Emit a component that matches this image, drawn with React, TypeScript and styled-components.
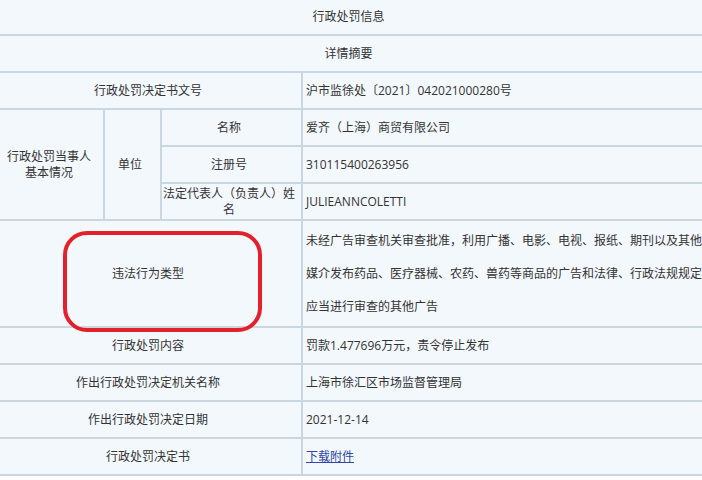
import React from "react";
import styled, { createGlobalStyle } from "styled-components";

const Global = createGlobalStyle`
  html, body { margin: 0; padding: 0; background: #ffffff; }
  body {
    font-family: "Open Sans", "Noto Sans CJK SC", sans-serif;
    font-size: 12px;
    color: #333333;
  }
`;

const Sheet = styled.div`
  display: grid;
  width: 702px;
  grid-template-columns: 103px 55px 139px 399px;
  grid-template-rows: 34px repeat(5, 35px) 105px repeat(4, 35px);
  gap: 2px;
  background: #cbd7e0;
  border-bottom: 2px solid #cbd7e0;
`;

const Cell = styled.div<{ $c: string; $r: string }>`
  grid-column: ${(p) => p.$c};
  grid-row: ${(p) => p.$r};
  background: #f3f8fd;
  display: flex;
  align-items: center;
  min-width: 0;
`;

const Label = styled(Cell)`
  justify-content: center;
  text-align: center;
  padding: 0 5px 0 0;
  line-height: 16px;
  position: relative;
`;

const Value = styled(Cell)`
  padding-left: 3px;
  line-height: 16px;
  white-space: nowrap;
`;

const LongValue = styled(Cell)`
  display: block;
  padding: 3px 0 3px 3px;
  line-height: 33px;
  white-space: nowrap;
  overflow: hidden;
`;

const Link = styled.a`
  color: #2f45a8;
  text-decoration: underline;
  cursor: pointer;
`;

const Highlight = styled.div`
  position: absolute;
  left: 63px;
  top: 10px;
  width: 199px;
  height: 101px;
  box-sizing: border-box;
  border: 4.5px solid #e3212b;
  border-radius: 24px;
  z-index: 1;
  pointer-events: none;
`;

export default function App() {
  return (
    <>
      <Global />
      <Sheet>
        <Label $c="1 / -1" $r="1">行政处罚信息</Label>
        <Label $c="1 / -1" $r="2">详情摘要</Label>

        <Label $c="1 / 4" $r="3">行政处罚决定书文号</Label>
        <Value $c="4" $r="3">沪市监徐处〔2021〕042021000280号</Value>

        <Label $c="1" $r="4 / 7">
          行政处罚当事人
          <br />
          基本情况
        </Label>
        <Label $c="2" $r="4 / 7">单位</Label>
        <Label $c="3" $r="4">名称</Label>
        <Value $c="4" $r="4">爱齐（上海）商贸有限公司</Value>
        <Label $c="3" $r="5">注册号</Label>
        <Value $c="4" $r="5">310115400263956</Value>
        <Label $c="3" $r="6">法定代表人（负责人）姓名</Label>
        <Value $c="4" $r="6">JULIEANNCOLETTI</Value>

        <Label $c="1 / 4" $r="7">
          违法行为类型
          <Highlight />
        </Label>
        <LongValue $c="4" $r="7">
          未经广告审查机关审查批准，利用广播、电影、电视、报纸、期刊以及其他
          <br />
          媒介发布药品、医疗器械、农药、兽药等商品的广告和法律、行政法规规定
          <br />
          应当进行审查的其他广告
        </LongValue>

        <Label $c="1 / 4" $r="8">行政处罚内容</Label>
        <Value $c="4" $r="8">罚款1.477696万元，责令停止发布</Value>

        <Label $c="1 / 4" $r="9">作出行政处罚决定机关名称</Label>
        <Value $c="4" $r="9">上海市徐汇区市场监督管理局</Value>

        <Label $c="1 / 4" $r="10">作出行政处罚决定日期</Label>
        <Value $c="4" $r="10">2021-12-14</Value>

        <Label $c="1 / 4" $r="11">行政处罚决定书</Label>
        <Value $c="4" $r="11">
          <Link>下载附件</Link>
        </Value>
      </Sheet>
    </>
  );
}
